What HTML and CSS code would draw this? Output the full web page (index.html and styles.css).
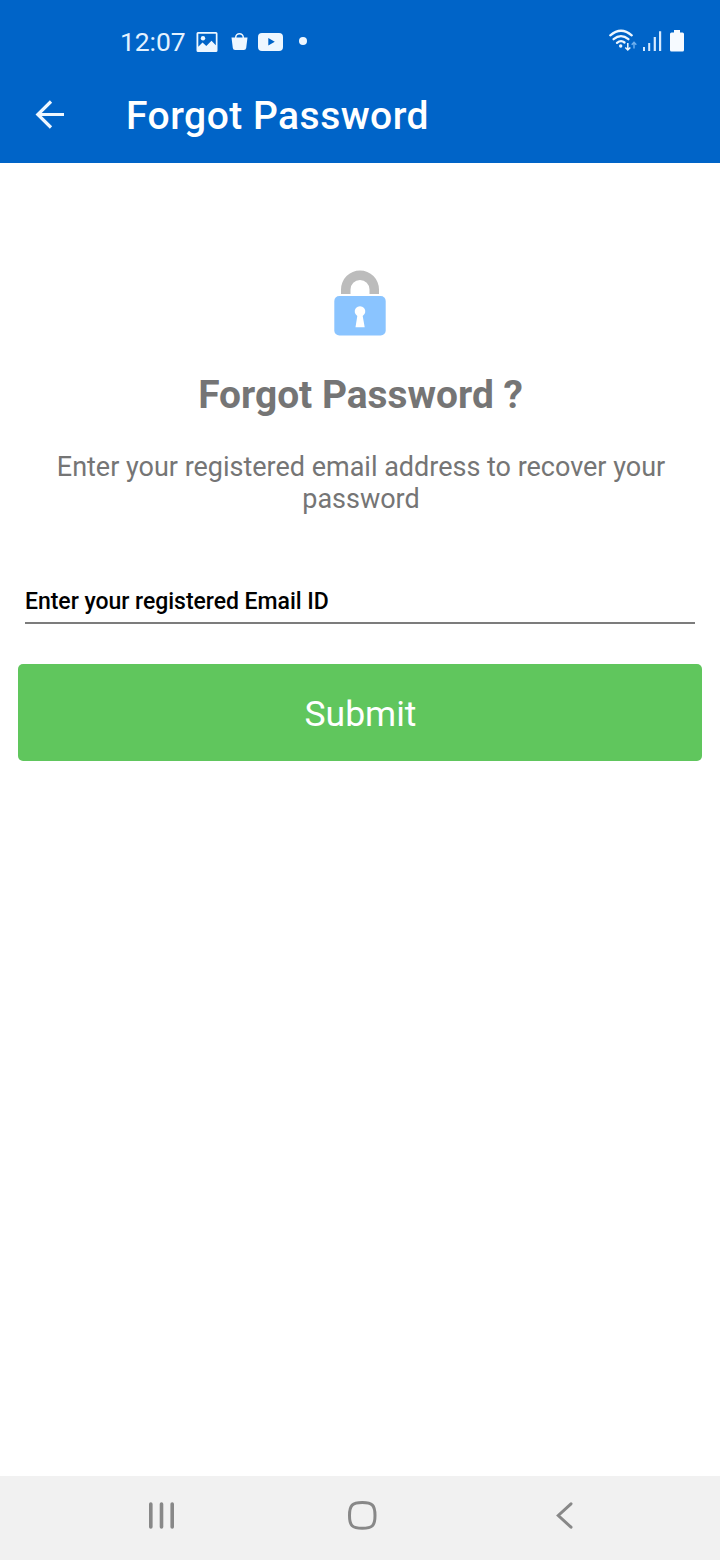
FILE: index.html
```html
<!DOCTYPE html>
<html lang="en">
<head>
<meta charset="utf-8">
<title>Forgot Password</title>
<link rel="stylesheet" href="styles.css">
</head>
<body>
<div class="screen">
  <header class="header">
    <div class="status">
      <span class="clock">12:07</span>
      <svg class="notices" width="116" height="26" viewBox="194 28 116 26" fill="#eef7ff">
        <path fill-rule="evenodd" d="M198 32h18q1.500 0 1.500 1.500v17q0 1.500-1.500 1.500h-18q-1.500 0-1.500-1.500v-17q0-1.500 1.500-1.500zM198.300 33.800v13l4.200-4.300 3.800 3.500 5.200-5.300 4.300 4.500v-11.400z"/>
        <circle cx="203" cy="38.200" r="2.200"/>
        <path d="M231.500 37.500h16l-1.300 10.500q-.3 2-2.300 2h-8.800q-2 0-2.300-2z"/>
        <path d="M235.700 39v-1.500a3.800 3.800 0 0 1 7.600 0V39" fill="none" stroke="#eef7ff" stroke-width="1.500"/>
        <path fill-rule="evenodd" d="M262 33h17q4 0 4 4v10q0 4-4 4h-17q-4 0-4-4V37q0-4 4-4zM268.300 38v7.600l6.500-3.800z"/>
        <circle cx="303" cy="41" r="4"/>
      </svg>
      <svg class="signals" width="80" height="26" viewBox="606 28 80 26">
        <g fill="none" stroke="#eef7ff" stroke-width="2.300" stroke-linecap="round">
          <path d="M610.300 35.300q10.700-9.200 21.400 0"/>
          <path d="M613.600 39.200q7.400-6.200 14.800 0"/>
          <path d="M617 42.800q4-3.200 7.500-.3"/>
        </g>
        <circle cx="620.700" cy="46" r="1.700" fill="#eef7ff"/>
        <path d="M627.800 43v6.500M625.300 47.500l2.500 2.500 2.500-2.500" fill="none" stroke="#eef7ff" stroke-width="1.500"/>
        <path d="M634 48.500v-6M631.700 44.700l2.300-2.500 2.300 2.500" fill="none" stroke="#6fb0ee" stroke-width="1.400"/>
        <path d="M643 47h2v4h-2zM648.200 43h2v8h-2zM653.700 37h2.200v14h-2.200zM659 31.300h2.200V51H659z" fill="#d6eaff"/>
        <path d="M674 30h6v2.500h2.500q1.500 0 1.500 1.500v16q0 1.500-1.500 1.500h-11q-1.500 0-1.500-1.500V34q0-1.500 1.500-1.500h2.500z" fill="#f6faff"/>
      </svg>
    </div>
    <div class="appbar">
      <svg class="back" width="32" height="32" viewBox="34 99 32 32" fill="none" stroke="#eef7ff" stroke-width="3.200">
        <path d="M64 114.500H37.500M51 101.500L37.800 114.500l13.200 13"/>
      </svg>
      <h1 class="title">Forgot Password</h1>
    </div>
  </header>
  <main class="content">
    <svg class="lock" width="52" height="66" viewBox="334 270 52 66">
      <path d="M341 294v-4.500a19 19 0 0 1 38 0v4.500h-9.500v-4.500a9.500 9.500 0 0 0-19 0v4.500z" fill="#bcbcbc"/>
      <rect x="334.300" y="296" width="51.400" height="39.500" rx="5" fill="#8ac4ff"/>
      <path d="M357.300 316a5.300 5.300 0 1 1 5.400 0l2 11.300h-9.200z" fill="#fff"/>
    </svg>
    <h2 class="heading">Forgot Password ?</h2>
    <p class="hint">Enter your registered email address to recover your password</p>
    <div class="field">Enter your registered Email ID</div>
    <button class="submit">Submit</button>
  </main>
  <nav class="navbar">
    <svg width="28" height="30" viewBox="148 1500 28 30" stroke="#888" stroke-width="3.600" stroke-linecap="round">
      <path d="M150.800 1504v23M161.500 1504v23M172.200 1504v23"/>
    </svg>
    <svg class="home" width="30" height="30" viewBox="347 1500 30 30" fill="none" stroke="#888" stroke-width="3">
      <path d="M362.300 1502.500c10 0 12.700 2.700 12.700 13s-2.700 12.800-12.700 12.800-12.800-2.500-12.800-12.800 2.800-13 12.800-13z"/>
    </svg>
    <svg class="prev" width="18" height="30" viewBox="556 1500 18 30" fill="none" stroke="#888" stroke-width="3" stroke-linecap="round">
      <path d="M571 1503.800L558.300 1515.500 571 1527.200"/>
    </svg>
  </nav>
</div>
</body>
</html>
```
FILE: styles.css
```css
* { box-sizing: border-box; }
body {
  margin: 0;
  font-family: Roboto, sans-serif;
  background: #fff;
}
svg { display: block; flex: none; }
.screen {
  width: 720px;
  height: 1560px;
  display: flex;
  flex-direction: column;
}
.header {
  height: 163px;
  background: #0064c8;
  color: #fff;
}
.status {
  height: 82px;
  padding: 28px 34px 0 120px;
  display: flex;
  align-items: flex-start;
}
.clock {
  width: 74px;
  font-size: 26.500px;
  line-height: 27px;
  color: #e4f2ff;
  letter-spacing: -0.1px;
  white-space: nowrap;
}
.signals { margin-left: auto; }
.appbar {
  height: 66px;
  display: flex;
  align-items: center;
  padding-left: 34px;
}
.title {
  margin: 0 0 0 60px;
  padding-top: 2px;
  font-size: 39px;
  line-height: 46px;
  font-weight: 500;
  letter-spacing: 0.480px;
  white-space: nowrap;
}
.content {
  flex: 1;
  padding: 107px 18px 0;
  display: flex;
  flex-direction: column;
  align-items: center;
  color: #757575;
}
.heading {
  margin: 36px 0 0;
  padding-left: 1px;
  font-size: 38.900px;
  line-height: 46px;
  font-weight: 700;
  white-space: nowrap;
}
.hint {
  margin: 33px 0 0;
  padding-left: 2px;
  width: 640px;
  font-size: 27px;
  line-height: 32px;
  letter-spacing: -0.010px;
  text-align: center;
}
.field {
  width: 670px;
  height: 42px;
  margin-top: 67px;
  padding-top: 5px;
  border-bottom: 2px solid #7c7c7c;
  font-size: 23px;
  line-height: 29px;
  font-weight: 500;
  letter-spacing: -0.030px;
  color: #000;
  white-space: nowrap;
}
.submit {
  width: 684px;
  height: 97px;
  margin-top: 40px;
  padding: 2px 0 0 1px;
  border: 0;
  border-radius: 5px;
  background: #60c65d;
  color: #fff;
  font-family: inherit;
  font-size: 35.500px;
}
.navbar {
  height: 84px;
  padding: 0 146px 6px 148px;
  background: #f1f1f1;
  display: flex;
  align-items: center;
}
.home { margin-left: 171px; }
.prev { margin-left: auto; }
```
